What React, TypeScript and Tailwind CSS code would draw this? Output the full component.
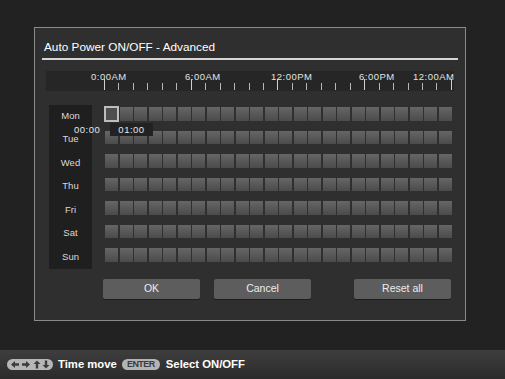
const DAYS = ['Mon', 'Tue', 'Wed', 'Thu', 'Fri', 'Sat', 'Sun'];
const HOURS = Array.from({ length: 24 }, (_, i) => i);
const TICKS = Array.from({ length: 25 }, (_, i) => i);

const LABELS = [
  { text: '0:00AM', left: 'left-[45px]' },
  { text: '6:00AM', left: 'left-[139px]' },
  { text: '12:00PM', left: 'left-[225px]' },
  { text: '6:00PM', left: 'left-[313px]' },
  { text: '12:00AM', left: 'left-[367px]' },
];

function Cell({ selected }: { selected?: boolean }) {
  if (selected) {
    return (
      <div className="h-full bg-[#4e4e4e] shadow-[0_0_0_1px_#bdbdbd,inset_0_0_0_1px_#bdbdbd]" />
    );
  }
  return <div className="h-full bg-gradient-to-b from-[#666666] to-[#4b4b4b]" />;
}

function Button({ label, className }: { label: string; className?: string }) {
  return (
    <div
      className={
        'flex h-[20px] w-[97px] items-center justify-center rounded-[2px] bg-[#5d5d5d] text-[10.5px] text-[#ececec] shadow-[0_1px_0_#1c1c1c] ' +
        (className ?? '')
      }
    >
      {label}
    </div>
  );
}

// four-way arrow key glyph
function ArrowKeys() {
  return (
    <svg width="46" height="11" viewBox="0 0 46 11">
      <rect x="0" y="0" width="46" height="11" rx="5.5" fill="#b6b6b6" />
      <g fill="#3c3c3c">
        <path d="M4 5.5 L8 2 L8 4.3 L12 4.3 L12 6.7 L8 6.7 L8 9 Z" />
        <path d="M23 5.5 L19 2 L19 4.3 L15 4.3 L15 6.7 L19 6.7 L19 9 Z" />
        <path d="M30 1.5 L33.5 5 L31.2 5 L31.2 9.5 L28.8 9.5 L28.8 5 L26.5 5 Z" />
        <path d="M39 9.5 L42.5 6 L40.2 6 L40.2 1.5 L37.8 1.5 L37.8 6 L35.5 6 Z" />
      </g>
    </svg>
  );
}

export default function App() {
  return (
    <div className="flex h-[379px] w-[505px] flex-col bg-[#222222] font-['Liberation_Sans',Arial,sans-serif]">
      {/* dialog */}
      <div className="ml-[34px] mt-[27px] flex h-[294px] w-[432px] flex-col border border-[#8a8a8a] bg-[#2f2f2f]">
        <div className="pl-[9px] pt-[12px] text-[11.8px] leading-[14px] text-white">
          Auto Power ON/OFF - Advanced
        </div>
        <div className="mx-[7px] mt-[4px] h-[2px] bg-[#d6d6d6]" />

        {/* timeline */}
        <div className="relative mx-[11px] mt-[11px] h-[20px] bg-[#262626]">
          {LABELS.map((l) => (
            <span
              key={l.text}
              className={'absolute top-[0px] text-[9.5px] leading-[11px] tracking-[0.5px] text-[#e2e2e2] ' + l.left}
            >
              {l.text}
            </span>
          ))}
          <div className="absolute bottom-[1px] left-[58px] flex h-[12px] w-[348px] items-end justify-between">
            {TICKS.map((t) => (
              <div
                key={t}
                className={t % 6 === 0 ? 'h-[11px] w-[1px] bg-[#d0d0d0]' : 'h-[7px] w-[1px] bg-[#b8b8b8]'}
              />
            ))}
          </div>
        </div>

        {/* schedule grid */}
        <div className="relative ml-[14px] mt-[14px] flex">
          <div className="flex w-[43px] flex-col gap-[10px] bg-[#1f1f1f] pb-[7px] pt-[2px]">
            {DAYS.map((d) => (
              <div
                key={d}
                className="flex h-[13.5px] items-end justify-center text-[9.5px] leading-[10px] text-[#dadada]"
              >
                {d}
              </div>
            ))}
          </div>
          <div className="ml-[13px] flex w-[347px] flex-col gap-[10px] pt-[2px]">
            {DAYS.map((d, r) => (
              <div key={d} className="grid h-[13.5px] grid-cols-[repeat(24,1fr)] gap-x-[1.5px]">
                {HOURS.map((h) => (
                  <Cell key={h} selected={r === 0 && h === 0} />
                ))}
              </div>
            ))}
          </div>

          {/* time tooltip */}
          <span className="absolute left-[25px] top-[20px] text-[9.5px] leading-[9px] tracking-[0.5px] text-[#e6e6e6]">
            00:00
          </span>
          <div className="absolute left-[61px] top-[18px] flex h-[13px] w-[43px] items-center justify-center bg-[#222222] text-[9.5px] leading-[9px] tracking-[0.5px] text-[#e6e6e6]">
            01:00
          </div>
        </div>

        {/* buttons */}
        <div className="ml-[68px] mt-[10px] flex">
          <Button label="OK" />
          <Button label="Cancel" className="ml-[14px]" />
          <Button label="Reset all" className="ml-[43px]" />
        </div>
      </div>

      {/* guide bar */}
      <div className="mt-auto flex h-[29px] items-center bg-gradient-to-b from-[#3e3e3e] to-[#2b2b2b] pl-[7px] text-[11.3px] font-semibold text-white">
        <ArrowKeys />
        <span className="ml-[5px]">Time move</span>
        <div className="ml-[5px] flex h-[11px] w-[38px] items-center justify-center rounded-full bg-[#b4b4b4] text-[9px] font-bold leading-none tracking-[-0.6px] text-[#3a3a3a]">
          ENTER
        </div>
        <span className="ml-[6px]">Select ON/OFF</span>
      </div>
    </div>
  );
}
